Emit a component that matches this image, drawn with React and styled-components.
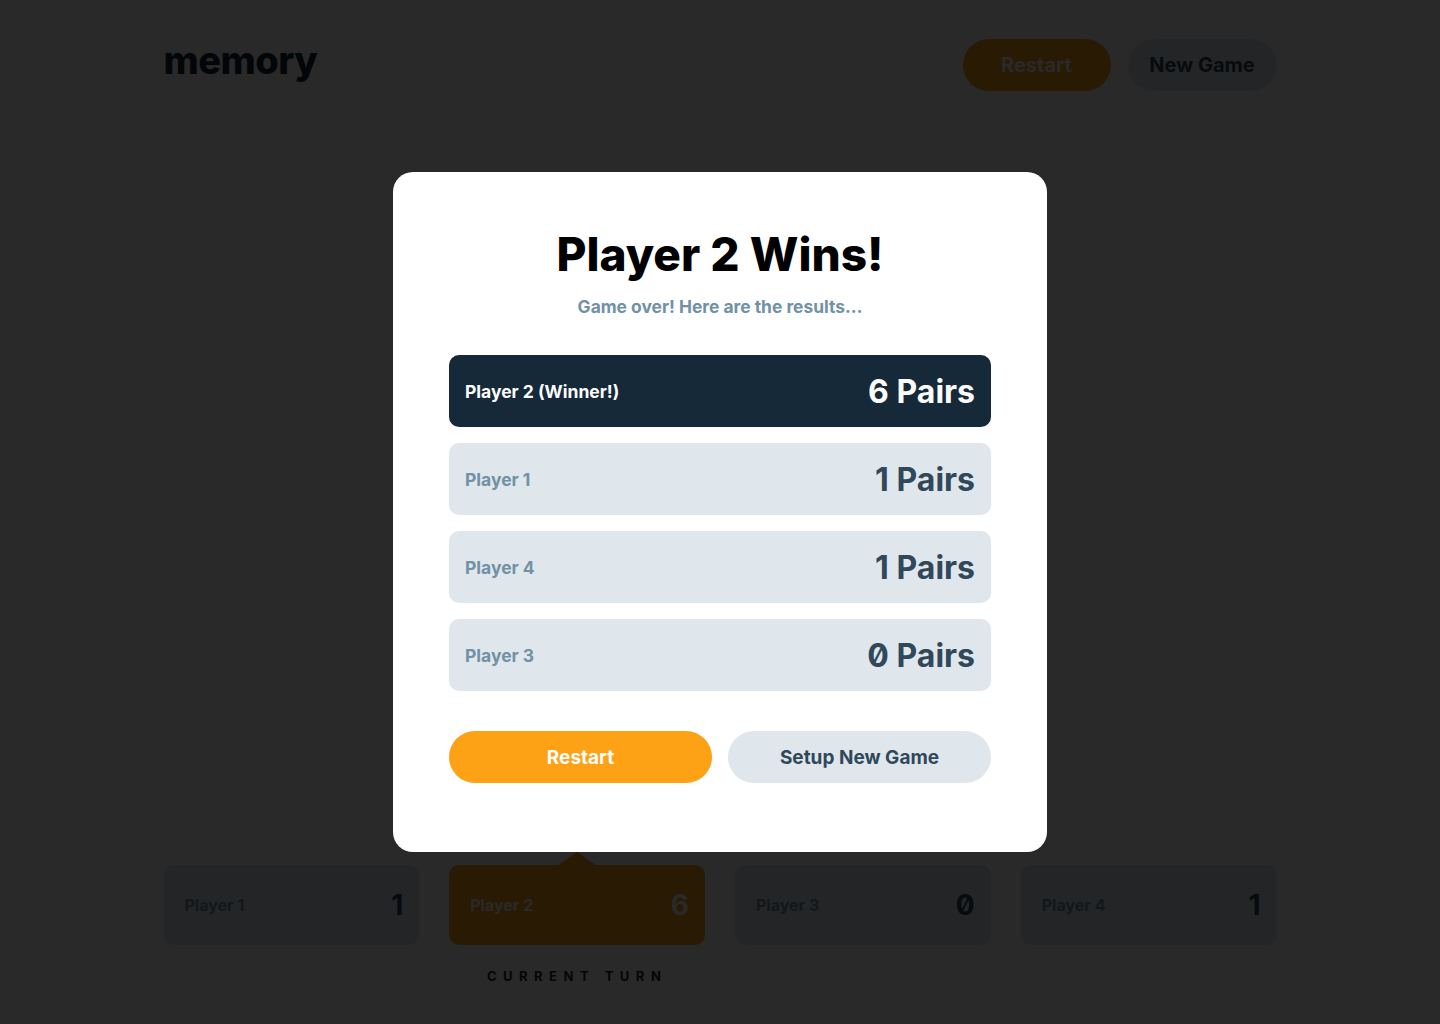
import { createGlobalStyle, styled } from "styled-components";

const GlobalStyle = createGlobalStyle`
  * { box-sizing: border-box; }
  body {
    margin: 0;
    background: #fcfcfc;
    font-family: "Inter", "Noto Sans", sans-serif;
    font-feature-settings: "zero" 1;
    color: #152938;
  }
`;

const players = [
  { name: "Player 1", score: 1 },
  { name: "Player 2", score: 6 },
  { name: "Player 3", score: 0 },
  { name: "Player 4", score: 1 },
];

const Page = styled.div`
  min-height: 100vh;
  display: flex;
  flex-direction: column;
  width: 1113px;
  margin: 0 auto;
`;

const Header = styled.header`
  display: flex;
  align-items: center;
  justify-content: space-between;
  padding-top: 39px;
`;

const Logo = styled.h1`
  margin: 0;
  font-size: 38px;
  font-weight: 800;
  letter-spacing: -0.5px;
  color: #152938;
  line-height: 1;
  transform: translateY(-5px);
`;

const Actions = styled.div`
  display: flex;
  gap: 17px;
`;

const PillButton = styled.button`
  border: 0;
  height: 52px;
  padding: 0;
  width: ${(p) => p.$width || "auto"};
  border-radius: 26px;
  font-family: inherit;
  font-weight: 700;
  font-size: ${(p) => p.$size || "20px"};
  white-space: nowrap;
  background: ${(p) => (p.$primary ? "#fda214" : "#dfe7ec")};
  color: ${(p) => (p.$primary ? "#fcfcfc" : "#304859")};
  cursor: pointer;
`;

const Board = styled.main`
  flex: 1;
`;

const Footer = styled.footer`
  display: grid;
  grid-template-columns: repeat(4, 1fr);
  gap: 30px;
  padding-bottom: 40px;
`;

const PlayerSlot = styled.div`
  display: flex;
  flex-direction: column;
  align-items: center;
  gap: 23px;
`;

const PlayerCard = styled.div`
  position: relative;
  width: 100%;
  height: 80px;
  border-radius: 10px;
  padding: 0 16px 0 21px;
  display: flex;
  align-items: center;
  justify-content: space-between;
  background: ${(p) => (p.$active ? "#fda214" : "#dfe7ec")};

  ${(p) =>
    p.$active &&
    `
    &::before {
      content: "";
      position: absolute;
      left: 50%;
      top: -13px;
      transform: translateX(-50%);
      border-left: 20px solid transparent;
      border-right: 20px solid transparent;
      border-bottom: 14px solid #fda214;
    }
  `}
`;

const CardName = styled.span`
  font-size: 16px;
  font-weight: 700;
  color: ${(p) => (p.$active ? "#fcfcfc" : "#7191a5")};
`;

const CardScore = styled.span`
  font-size: 28px;
  font-weight: 700;
  color: ${(p) => (p.$active ? "#fcfcfc" : "#304859")};
`;

const TurnLabel = styled.span`
  font-size: 13px;
  font-weight: 700;
  letter-spacing: 6.5px;
  color: #152938;
  height: 16px;
  visibility: ${(p) => (p.$show ? "visible" : "hidden")};
`;

const Overlay = styled.div`
  position: fixed;
  inset: 0;
  background: rgba(0, 0, 0, 0.84);
  display: flex;
  align-items: center;
  justify-content: center;
`;

const Modal = styled.div`
  width: 654px;
  background: #ffffff;
  border-radius: 20px;
  padding: 51px 56px 69px;
  display: flex;
  flex-direction: column;
  align-items: center;
`;

const Title = styled.h2`
  margin: 0;
  font-size: 46px;
  font-weight: 800;
  color: #000;
  line-height: 62px;
`;

const Subtitle = styled.p`
  margin: 11px 0 38px;
  font-size: 17.4px;
  font-weight: 700;
  color: #7191a5;
`;

const Results = styled.div`
  width: 100%;
  display: flex;
  flex-direction: column;
  gap: 16px;
`;

const ResultRow = styled.div`
  height: 72px;
  border-radius: 10px;
  padding: 0 16px;
  display: flex;
  align-items: center;
  justify-content: space-between;
  background: ${(p) => (p.$winner ? "#152938" : "#dfe7ec")};
`;

const ResultName = styled.span`
  font-size: 17.5px;
  font-weight: 700;
  color: ${(p) => (p.$winner ? "#fcfcfc" : "#7191a5")};
`;

const ResultValue = styled.span`
  font-size: 32px;
  font-weight: 700;
  color: ${(p) => (p.$winner ? "#fcfcfc" : "#304859")};
`;

const ModalActions = styled.div`
  width: 100%;
  display: grid;
  grid-template-columns: 1fr 1fr;
  gap: 16px;
  margin-top: 40px;
`;

const results = [
  { name: "Player 2 (Winner!)", value: 6, winner: true },
  { name: "Player 1", value: 1 },
  { name: "Player 4", value: 1 },
  { name: "Player 3", value: 0 },
];

export default function App() {
  return (
    <>
      <GlobalStyle />
      <Page>
        <Header>
          <Logo>memory</Logo>
          <Actions>
            <PillButton $primary $width="148px">Restart</PillButton>
            <PillButton $width="149px">New Game</PillButton>
          </Actions>
        </Header>
        <Board />
        <Footer>
          {players.map((p, i) => (
            <PlayerSlot key={p.name}>
              <PlayerCard $active={i === 1}>
                <CardName $active={i === 1}>{p.name}</CardName>
                <CardScore $active={i === 1}>{p.score}</CardScore>
              </PlayerCard>
              <TurnLabel $show={i === 1}>CURRENT TURN</TurnLabel>
            </PlayerSlot>
          ))}
        </Footer>
      </Page>
      <Overlay>
        <Modal>
          <Title>Player 2 Wins!</Title>
          <Subtitle>Game over! Here are the results…</Subtitle>
          <Results>
            {results.map((r) => (
              <ResultRow key={r.name} $winner={r.winner}>
                <ResultName $winner={r.winner}>{r.name}</ResultName>
                <ResultValue $winner={r.winner}>{r.value} Pairs</ResultValue>
              </ResultRow>
            ))}
          </Results>
          <ModalActions>
            <PillButton $primary $size="19px">Restart</PillButton>
            <PillButton $size="19px">Setup New Game</PillButton>
          </ModalActions>
        </Modal>
      </Overlay>
    </>
  );
}
